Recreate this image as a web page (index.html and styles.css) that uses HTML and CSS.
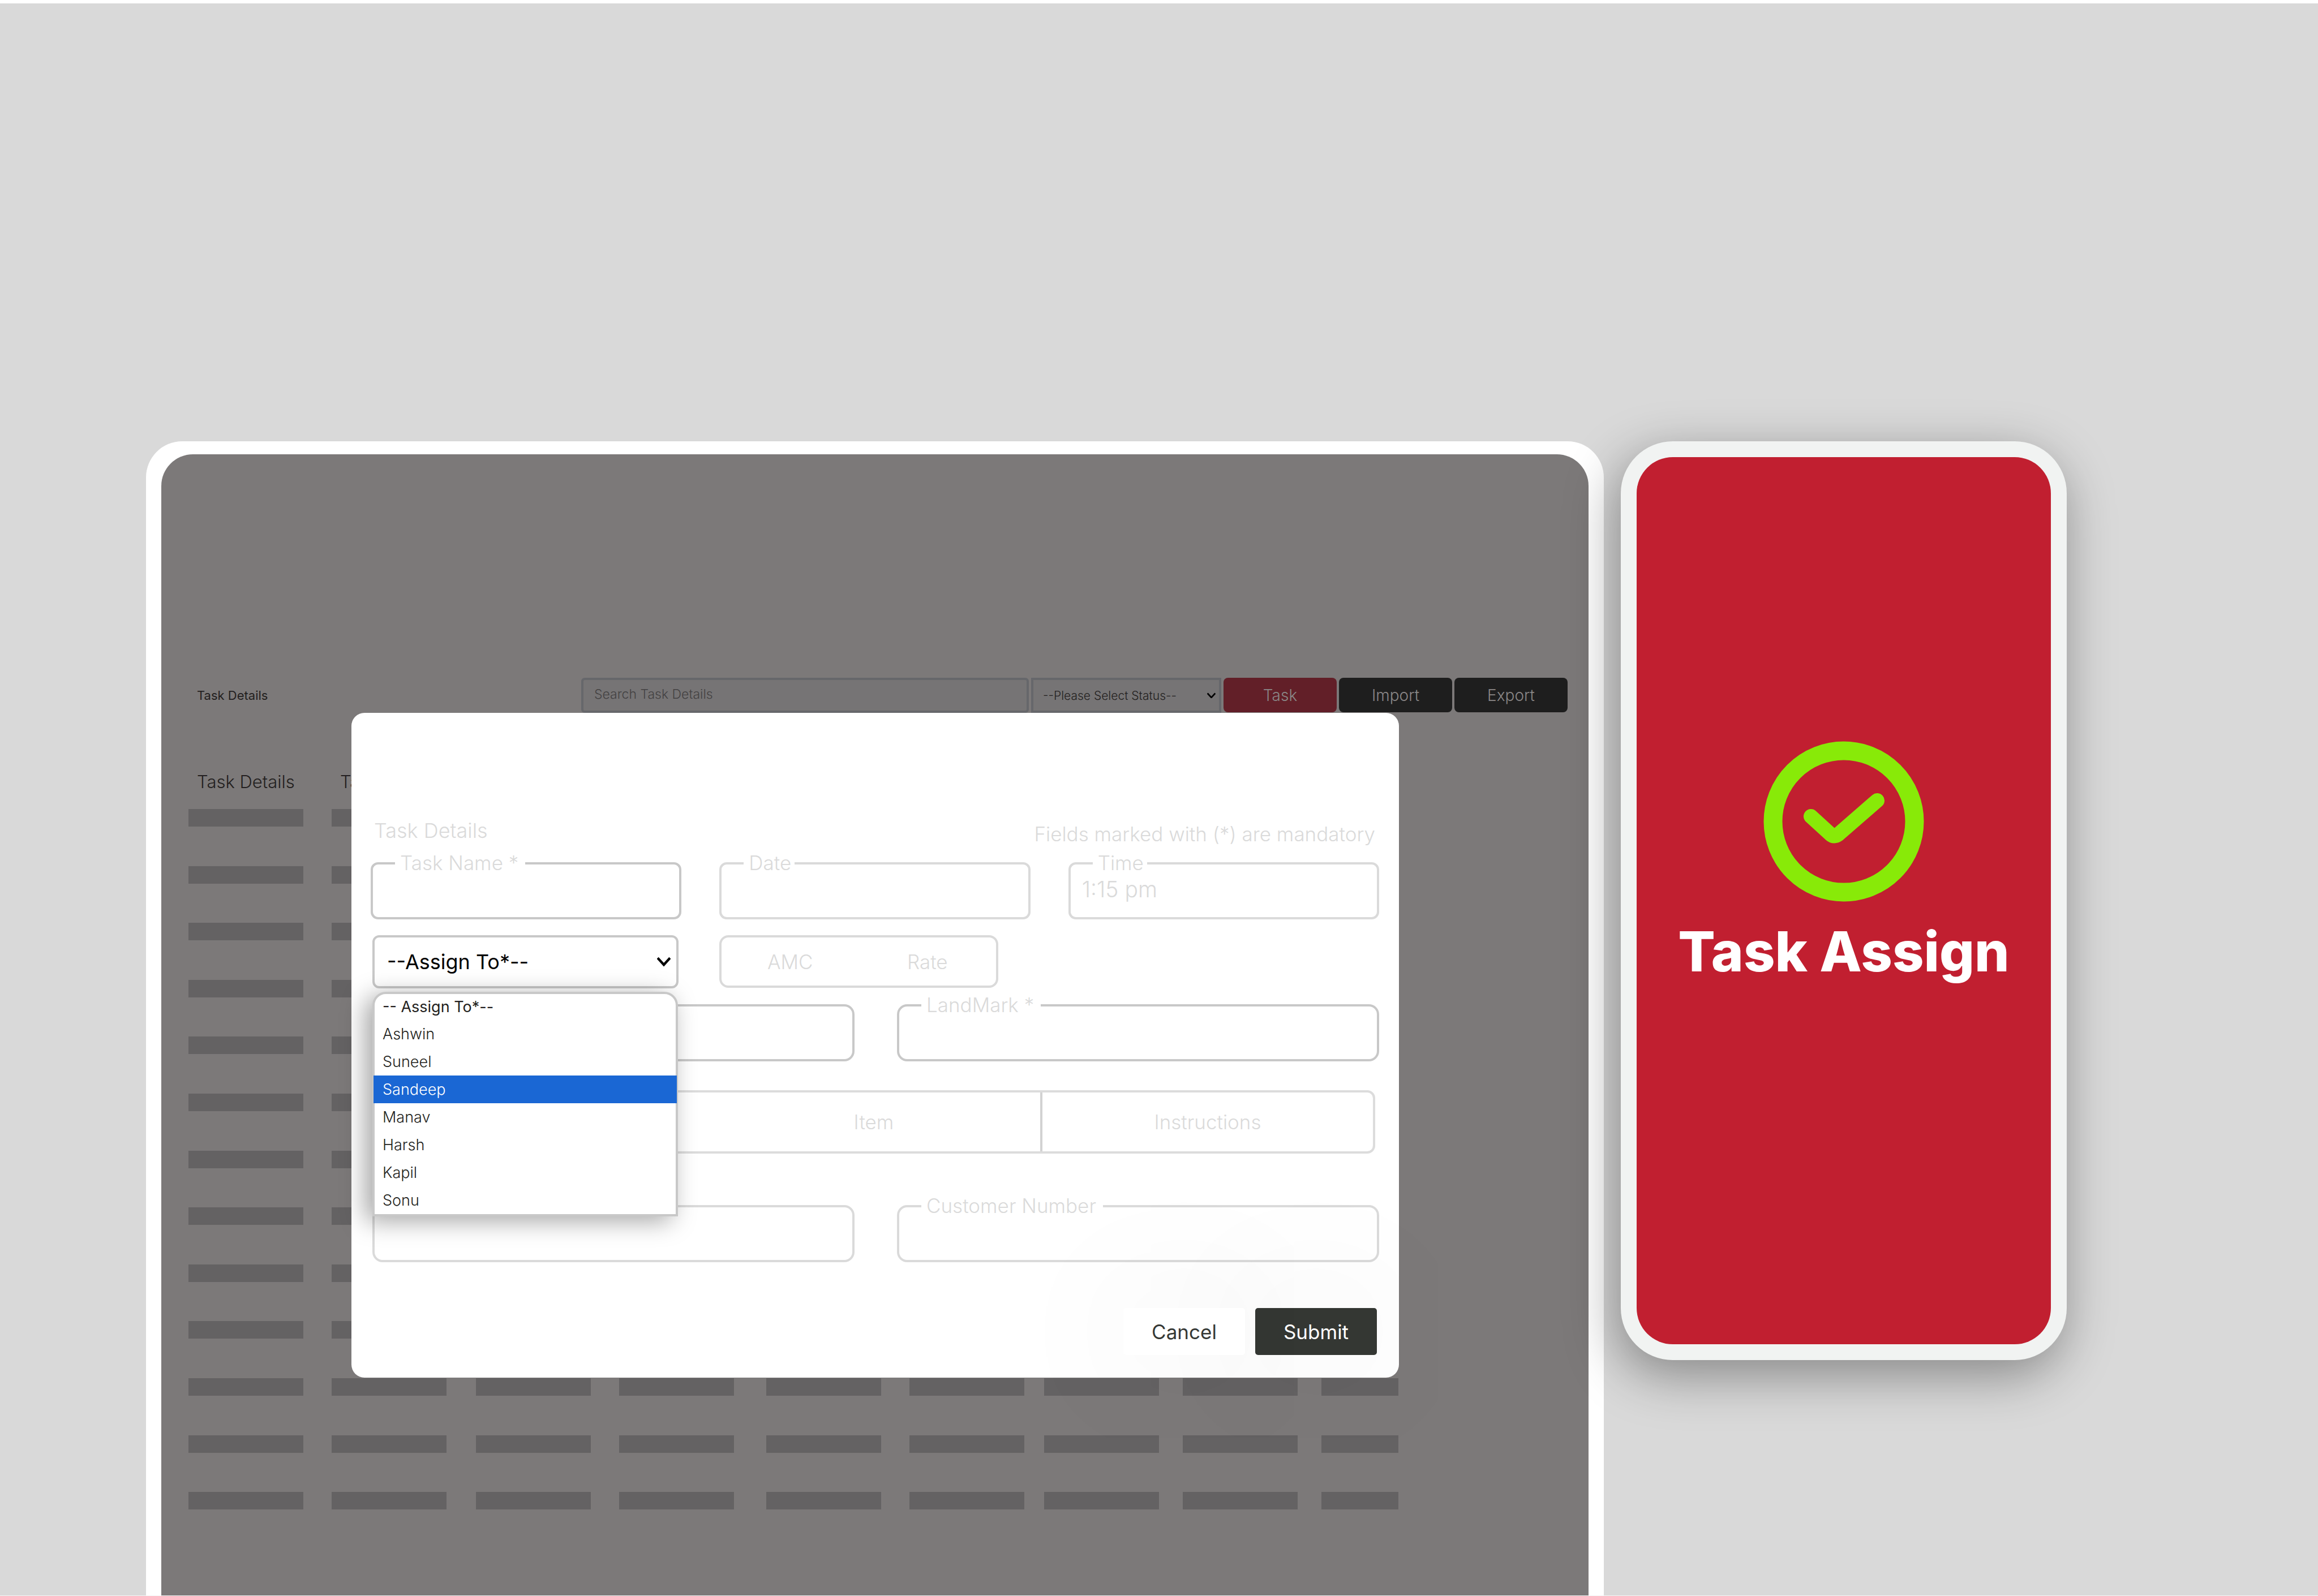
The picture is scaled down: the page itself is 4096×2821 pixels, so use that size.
FILE: index.html
```html
<!DOCTYPE html>
<html lang="en">
<head>
<meta charset="utf-8">
<meta name="viewport" content="width=device-width, initial-scale=1">
<title>Task Assign</title>
<link rel="stylesheet" href="styles.css">
</head>
<body>
<main class="stage">
  <section class="tablet">
    <div class="screen">
      <header class="toolbar">
        <h1 class="toolbar-title">Task Details</h1>
        <input class="search" type="search" placeholder="Search Task Details" aria-label="Search Task Details">
        <div class="select-wrap status-wrap">
          <select class="status" aria-label="Status"><option>--Please Select Status--</option></select>
          <svg class="chevron" viewBox="0 0 22 16" aria-hidden="true"><path d="M1 2 L11 13 L21 2"/></svg>
        </div>
        <div class="actions">
          <button class="action action-task" type="button">Task</button>
          <button class="action" type="button">Import</button>
          <button class="action" type="button">Export</button>
        </div>
      </header>

      <table class="tasks">
        <colgroup>
          <col class="col-a"><col class="col-b"><col class="col-a"><col class="col-c"><col class="col-a"><col class="col-d"><col class="col-e"><col class="col-e"><col class="col-f">
        </colgroup>
        <thead>
          <tr><th scope="col">Task Details</th><th scope="col">Task</th><th></th><th></th><th></th><th></th><th></th><th></th><th></th></tr>
        </thead>
        <tbody>
          <tr><td></td><td></td><td></td><td></td><td></td><td></td><td></td><td></td><td></td></tr>
          <tr><td></td><td></td><td></td><td></td><td></td><td></td><td></td><td></td><td></td></tr>
          <tr><td></td><td></td><td></td><td></td><td></td><td></td><td></td><td></td><td></td></tr>
          <tr><td></td><td></td><td></td><td></td><td></td><td></td><td></td><td></td><td></td></tr>
          <tr><td></td><td></td><td></td><td></td><td></td><td></td><td></td><td></td><td></td></tr>
          <tr><td></td><td></td><td></td><td></td><td></td><td></td><td></td><td></td><td></td></tr>
          <tr><td></td><td></td><td></td><td></td><td></td><td></td><td></td><td></td><td></td></tr>
          <tr><td></td><td></td><td></td><td></td><td></td><td></td><td></td><td></td><td></td></tr>
          <tr><td></td><td></td><td></td><td></td><td></td><td></td><td></td><td></td><td></td></tr>
          <tr><td></td><td></td><td></td><td></td><td></td><td></td><td></td><td></td><td></td></tr>
          <tr><td></td><td></td><td></td><td></td><td></td><td></td><td></td><td></td><td></td></tr>
          <tr><td></td><td></td><td></td><td></td><td></td><td></td><td></td><td></td><td></td></tr>
          <tr><td></td><td></td><td></td><td></td><td></td><td></td><td></td><td></td><td></td></tr>
        </tbody>
      </table>

      <form class="modal">
        <header class="modal-head">
          <h2 class="modal-title">Task Details</h2>
          <p class="modal-hint">Fields marked with (*) are mandatory</p>
        </header>

        <div class="row row-three">
          <div class="field required">
            <label for="task-name">Task Name *</label>
            <input id="task-name" type="text">
          </div>
          <div class="field">
            <label class="snug" for="date">Date</label>
            <input id="date" type="text">
          </div>
          <div class="field">
            <label class="snug" for="time">Time</label>
            <input id="time" type="text" value="1:15 pm">
          </div>
        </div>

        <div class="row row-assign">
          <div class="assign-cell">
            <div class="select-wrap">
              <select class="assign" aria-label="Assign To"><option>--Assign To*--</option></select>
              <svg class="chevron" viewBox="0 0 22 16" aria-hidden="true"><path d="M1 2 L11 13 L21 2"/></svg>
            </div>
            <ul class="menu" role="listbox" aria-label="Assign To">
              <li class="menu-first" role="option">-- Assign To*--</li>
              <li role="option">Ashwin</li>
              <li role="option">Suneel</li>
              <li class="menu-active" role="option" aria-selected="true">Sandeep</li>
              <li role="option">Manav</li>
              <li role="option">Harsh</li>
              <li role="option">Kapil</li>
              <li role="option">Sonu</li>
            </ul>
          </div>
          <div class="kind">
            <button class="segment" type="button">AMC</button>
            <button class="segment" type="button">Rate</button>
          </div>
        </div>

        <div class="row row-two">
          <div class="field round required">
            <input type="text" aria-label="Address">
          </div>
          <div class="field round required">
            <label for="landmark">LandMark *</label>
            <input id="landmark" type="text">
          </div>
        </div>

        <div class="tabs">
          <button class="tab tab-item" type="button">Item</button>
          <button class="tab tab-split" type="button">Instructions</button>
        </div>

        <div class="row row-two">
          <div class="field round">
            <input type="text" aria-label="Customer">
          </div>
          <div class="field round">
            <label for="customer-number">Customer Number</label>
            <input id="customer-number" type="text">
          </div>
        </div>

        <footer class="modal-foot">
          <button class="btn btn-cancel" type="button">Cancel</button>
          <button class="btn btn-submit" type="submit">Submit</button>
        </footer>
      </form>
    </div>
  </section>

  <aside class="phone">
    <div class="phone-screen">
      <svg class="tick" viewBox="0 0 284 284" aria-hidden="true">
        <circle cx="142" cy="142" r="125" stroke-width="33"/>
        <path d="M84 133 L119 165 Q125 170 132 165 L201 105" stroke-width="26"/>
        <path d="M112 153 L125 170 L140 153" stroke-width="8"/>
      </svg>
      <p class="phone-title">Task Assign</p>
    </div>
  </aside>
</main>
</body>
</html>
```
FILE: styles.css
```css
:root {
  --line: #dadada;
  --line-strong: #c8c8c8;
  --ink: #231f20;
}

* { box-sizing: border-box; }

body {
  margin: 0;
  background: #d9d9d9;
  font-family: Inter, "Open Sans", sans-serif;
  font-weight: 300;
  color: var(--ink);
}

h1, h2, p, ul { margin: 0; padding: 0; font-weight: 300; }

button, input, select { font: inherit; color: inherit; margin: 0; }

/* Stage: tablet on the left, phone on the right */
.stage {
  display: flex;
  align-items: stretch;
  gap: 30px;
  min-height: 100vh;
  padding: 774px 444px 0 258px;
  border-top: 6px solid #fff;
  border-bottom: 1px solid #f4f4f4;
}

.tablet {
  flex: 1;
  min-width: 0;
  display: flex;
  padding: 23px 27px 0;
  background: #fff;
  border-radius: 64px 64px 0 0;
}

.screen {
  position: relative;
  flex: 1;
  min-width: 0;
  padding: 395px 37px 0 48px;
  background: #7c7979;
  border-radius: 56px 56px 0 0;
}

/* Toolbar */
.toolbar {
  display: flex;
  align-items: flex-start;
  gap: 4px;
}

.toolbar-title {
  flex: 1;
  padding-left: 15px;
  font-size: 22px;
  font-weight: 400;
  line-height: 62px;
  white-space: nowrap;
}

.search {
  flex: 0 1 791px;
  min-width: 0;
  height: 62px;
  padding: 0 0 4px 19px;
  border: 4px solid #66676b;
  border-radius: 6px;
  background: #767475;
  font-size: 23px;
  appearance: none;
}

.search::placeholder { color: #444243; opacity: 1; }

.select-wrap { display: grid; align-items: center; }

.select-wrap > * { grid-area: 1 / 1; }

.select-wrap select { width: 100%; appearance: none; }

.chevron {
  justify-self: end;
  pointer-events: none;
  fill: none;
  stroke: #000;
  stroke-width: 4;
}

.status-wrap { flex: none; width: 336px; }

.status {
  height: 62px;
  padding: 0 17px;
  border: 4px solid #66676b;
  border-radius: 0;
  background: #767475;
  font-size: 21px;
}

.status-wrap .chevron { width: 15px; margin-right: 10px; }

.actions { display: flex; gap: 4px; }

.action {
  width: 200px;
  height: 61px;
  padding: 0;
  border: 0;
  border-radius: 8px;
  background: #1e1e1e;
  color: #8a8787;
  font-size: 28px;
}

.action-task { background: #621f28; }

/* Task list placeholder */
.tasks {
  width: 2137px;
  height: 1380px;
  margin-top: 98px;
  table-layout: fixed;
  border-collapse: collapse;
}

.col-a { width: 253px; }
.col-b { width: 255px; }
.col-c { width: 260px; }
.col-d { width: 238px; }
.col-e { width: 245px; }
.col-f { width: 136px; }

.tasks th {
  height: 72px;
  padding: 0 0 0 15px;
  font-size: 31px;
  font-weight: 300;
  line-height: 48px;
  text-align: left;
  vertical-align: top;
  white-space: nowrap;
}

.tasks td { padding: 0; vertical-align: top; }

.tasks td::before {
  content: "";
  display: block;
  max-width: 203px;
  height: 31px;
  background: #646263;
}

/* Dialog */
.modal {
  position: absolute;
  top: 457px;
  left: 336px;
  right: 335px;
  padding: 184px 35px 40px 34px;
  background: #fff;
  border-radius: 23px;
  color: var(--line);
  font-size: 35px;
}

.modal-head {
  display: flex;
  justify-content: space-between;
  min-height: 54px;
  padding: 0 7px 0 6px;
  line-height: 48px;
}

.modal-title { font-size: 36px; }

.modal-hint { align-self: flex-end; }

.row { display: grid; }

.row-three {
  grid-template-columns: repeat(3, 1fr);
  gap: 67px;
  margin-top: 26px;
}

.row-two {
  grid-template-columns: repeat(2, 1fr);
  gap: 75px;
  margin: 28px 0 0 3px;
}

.row-assign {
  grid-template-columns: 541px 493px;
  gap: 72px;
  margin: 28px 0 0 3px;
}

.field { position: relative; }

.field input {
  display: block;
  width: 100%;
  height: 101px;
  padding: 0 20px 6px;
  border: 4px solid var(--line);
  border-radius: 13px;
  background: transparent;
  font-size: 39px;
}

.field.round input { border-radius: 18px; }

.field.required input { border-color: var(--line-strong); }

/* Labels sit over the top border of their field */
.field label {
  position: absolute;
  top: -23px;
  left: 43px;
  padding: 0 12px 0 9px;
  background: #fff;
  line-height: 48px;
}

.field label.snug { padding-right: 6px; }

.assign-cell { position: relative; }

.assign {
  height: 94px;
  padding: 0 22px;
  border: 4px solid var(--line-strong);
  border-radius: 12px;
  background: #fff;
  color: #000;
  font-size: 36px;
  font-weight: 400;
}

.assign-cell .chevron { width: 24px; margin-right: 14px; }

.menu {
  position: absolute;
  z-index: 1;
  top: 100px;
  left: 0;
  right: 1px;
  border: 4px solid var(--line-strong);
  border-radius: 24px 24px 0 0;
  background: #fff;
  box-shadow: -12px 8px 44px rgba(0, 0, 0, .36);
  color: var(--ink);
  font-size: 27px;
  line-height: 49px;
  list-style: none;
}

.menu li { margin: 0 -2px; padding-left: 16px; }

.menu .menu-first { font-weight: 400; line-height: 46px; }

.menu .menu-active { background: #1a67d4; color: #fff; }

.kind {
  display: flex;
  height: 93px;
  border: 4px solid var(--line);
  border-radius: 16px;
}

.segment {
  flex: 1;
  padding: 0;
  border: 0;
  background: none;
}

.tabs {
  display: grid;
  grid-template-columns: 2fr 1fr;
  height: 112px;
  margin: 51px 7px 91px 3px;
  border: 4px solid #dcdcdc;
  border-radius: 14px;
}

.tab { border: 0; background: none; }

.tab-item { padding: 0 0 0 50%; }

.tab-split { padding: 0; border-left: 4px solid #d2d2d2; }

.tabs + .row-two { margin-top: 0; }

.modal-foot {
  display: flex;
  justify-content: flex-end;
  gap: 18px;
  margin: 81px 4px 0 0;
}

.btn {
  width: 215px;
  height: 83px;
  padding: 0;
  border: 0;
  border-radius: 5px;
  font-weight: 400;
}

.btn-cancel {
  background: #fff;
  box-shadow: 0 0 260px rgba(0, 0, 0, .1);
  color: #353835;
}

.btn-submit {
  position: relative;
  background: #343733;
  box-shadow: 0 0 260px rgba(0, 0, 0, .1);
  color: #fff;
}

.btn-cancel { position: relative; z-index: 1; }

/* Phone */
.phone {
  position: relative;
  flex: none;
  align-self: flex-start;
  display: flex;
  width: 788px;
  height: 1624px;
  padding: 28px;
  border-radius: 92px;
  background: #f1f3f2;
  box-shadow: -8px 26px 90px rgba(0, 0, 0, .38);
}

.phone-screen {
  flex: 1;
  display: flex;
  flex-direction: column;
  align-items: center;
  gap: 32px;
  padding-top: 502px;
  border-radius: 64px;
  background: #c11f30;
}

.tick {
  width: 284px;
  height: 284px;
  fill: none;
  stroke: #88ea08;
  stroke-linecap: round;
  stroke-linejoin: round;
}

.phone-title {
  color: #fff;
  font-size: 97px;
  font-weight: 800;
  line-height: 112px;
  white-space: nowrap;
}
```
